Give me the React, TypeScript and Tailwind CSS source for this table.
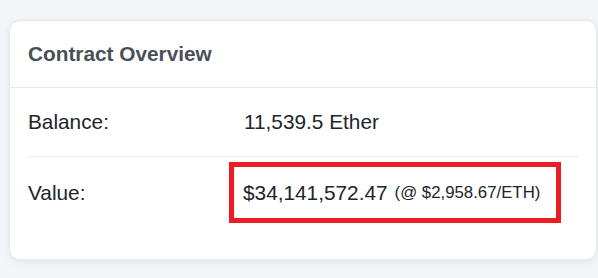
export default function App() {
  return (
    <div className="h-[278px] w-[598px] overflow-hidden bg-[#f4f5f8] pl-[9px] pt-[20px] font-['Liberation_Sans',Arial,sans-serif]">
      <div className="h-[240px] w-[588px] rounded-[11px] border border-[#e7e8ee] bg-white shadow-[0_2px_6px_rgba(180,185,200,0.25)]">
        <div className="flex h-[67px] items-center border-b border-[#e7e8ee] px-[18px]">
          <h2 className="text-[20.8px] font-bold text-[#4a4f57]">Contract Overview</h2>
        </div>
        <div className="px-[17px] text-[20.8px] text-[#212529]">
          <div className="flex h-[69px] items-center border-b border-[#ebecef]">
            <div className="w-[217px] pl-px">Balance:</div>
            <div>11,539.5 Ether</div>
          </div>
          <div className="flex items-center pt-[5px]">
            <div className="w-[217px] pl-px">Value:</div>
            <div className="-ml-[15px] flex h-[61px] w-[332px] items-center whitespace-nowrap border-[5px] border-[#ec1c24] pl-[9px]">
              $34,141,572.47
              <span className="ml-[7px] text-[16.8px]">(@ $2,958.67/ETH)</span>
            </div>
          </div>
        </div>
      </div>
    </div>
  )
}
